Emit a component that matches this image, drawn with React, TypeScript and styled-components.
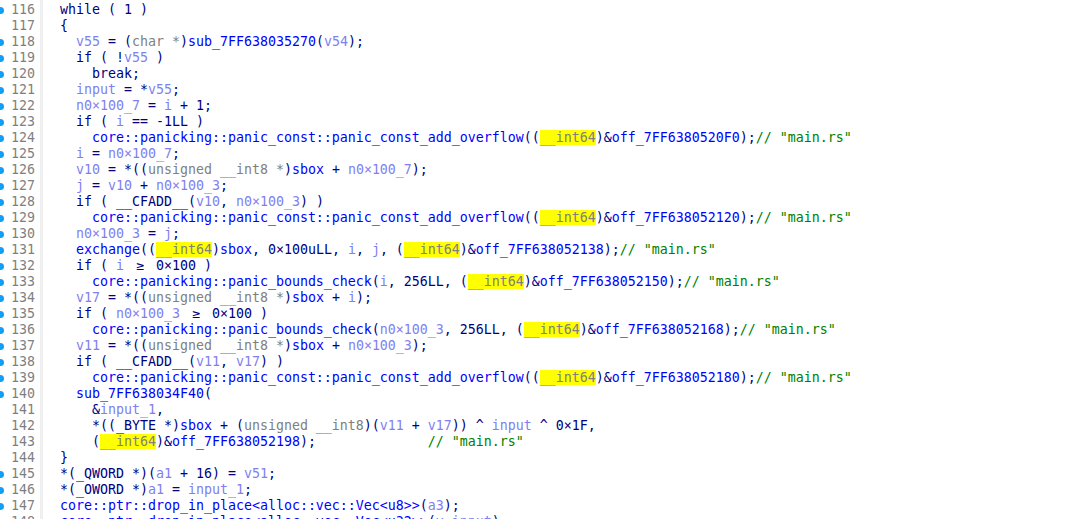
import React from "react";
import styled, { createGlobalStyle } from "styled-components";

const Global = createGlobalStyle`
  html, body {
    margin: 0;
    padding: 0;
    background: #ffffff;
    overflow: hidden;
  }
  body {
    width: 1084px;
    height: 519px;
  }
`;

type Kind = "n" | "f" | "l" | "t" | "h" | "c" | "g";

const colors: Record<Kind, string> = {
  n: "#000080",
  f: "#0000ff",
  l: "#8080f0",
  t: "#808080",
  h: "#808080",
  c: "#008000",
  g: "#000080",
};

const Page = styled.div`
  height: 519px;
  overflow: hidden;
  background: #ffffff;
  font-family: "DejaVu Sans Mono", "Liberation Mono", monospace;
  font-size: 13.29px;
  line-height: 16px;
`;

const Listing = styled.div`
  display: flex;
  flex-direction: column;
  margin-top: -14px;
`;

const Row = styled.div`
  display: flex;
  height: 16px;
`;

const Gutter = styled.div`
  position: relative;
  flex: 0 0 43px;
  box-sizing: border-box;
  padding-right: 5px;
  text-align: right;
  color: #7f7f7f;
  border-right: 3px solid #efefef;
`;

const Dot = styled.span`
  position: absolute;
  left: -3px;
  top: 50%;
  width: 7px;
  height: 7px;
  margin-top: -3px;
  border-radius: 50%;
  background: #12a0f2;
`;

const Code = styled.div`
  padding-left: 1px;
  white-space: pre;
  color: #000080;
`;

const Tok = styled.span<{ $kind: Kind }>`
  color: ${(p) => colors[p.$kind]};
  background: ${(p) => (p.$kind === "h" ? "#ffff00" : "transparent")};
`;

const Lig = styled.span`
  display: inline-block;
  width: 16px;
  text-align: center;
  color: #000080;
`;

type Line = { no: number; dot: boolean; src: string };

const L = (no: number, dot: boolean, src: string): Line => ({ no, dot, src });

const add = (off: string) =>
  `      [[f:core::panicking::panic_const::panic_const_add_overflow]](([[h:__int64]])&[[f:${off}]]);[[c:// "main.rs"]]`;

const lines: Line[] = [
  L(115, true, `  [[l:v54]] = *(([[t:char *]])[[l:a2]] + 8);`),
  L(116, true, `  while ( 1 )`),
  L(117, false, `  {`),
  L(118, true, `    [[l:v55]] = ([[t:char *]])[[f:sub_7FF638035270]]([[l:v54]]);`),
  L(119, true, `    if ( ![[l:v55]] )`),
  L(120, true, `      break;`),
  L(121, true, `    [[l:input]] = *[[l:v55]];`),
  L(122, true, `    [[l:n0×100_7]] = [[l:i]] + 1;`),
  L(123, true, `    if ( [[l:i]] == -1LL )`),
  L(124, true, add("off_7FF6380520F0")),
  L(125, true, `    [[l:i]] = [[l:n0×100_7]];`),
  L(126, true, `    [[l:v10]] = *(([[t:unsigned __int8 *]])[[f:sbox]] + [[l:n0×100_7]]);`),
  L(127, true, `    [[l:j]] = [[l:v10]] + [[l:n0×100_3]];`),
  L(128, true, `    if ( __CFADD__([[l:v10]], [[l:n0×100_3]]) )`),
  L(129, true, add("off_7FF638052120")),
  L(130, true, `    [[l:n0×100_3]] = [[l:j]];`),
  L(
    131,
    true,
    `    [[f:exchange]](([[h:__int64]])[[f:sbox]], 0×100uLL, [[l:i]], [[l:j]], ([[h:__int64]])&[[f:off_7FF638052138]]);[[c:// "main.rs"]]`
  ),
  L(132, true, `    if ( [[l:i]] [[g:>=]] 0×100 )`),
  L(
    133,
    true,
    `      [[f:core::panicking::panic_bounds_check]]([[l:i]], 256LL, ([[h:__int64]])&[[f:off_7FF638052150]]);[[c:// "main.rs"]]`
  ),
  L(134, true, `    [[l:v17]] = *(([[t:unsigned __int8 *]])[[f:sbox]] + [[l:i]]);`),
  L(135, true, `    if ( [[l:n0×100_3]] [[g:>=]] 0×100 )`),
  L(
    136,
    true,
    `      [[f:core::panicking::panic_bounds_check]]([[l:n0×100_3]], 256LL, ([[h:__int64]])&[[f:off_7FF638052168]]);[[c:// "main.rs"]]`
  ),
  L(137, true, `    [[l:v11]] = *(([[t:unsigned __int8 *]])[[f:sbox]] + [[l:n0×100_3]]);`),
  L(138, true, `    if ( __CFADD__([[l:v11]], [[l:v17]]) )`),
  L(139, true, add("off_7FF638052180")),
  L(140, true, `    [[f:sub_7FF638034F40]](`),
  L(141, false, `      &[[l:input_1]],`),
  L(
    142,
    false,
    `      *((_BYTE *)[[f:sbox]] + ([[t:unsigned __int8]])([[l:v11]] + [[l:v17]])) ^ [[l:input]] ^ 0×1F,`
  ),
  L(143, false, `      ([[h:__int64]])&[[f:off_7FF638052198]]);              [[c:// "main.rs"]]`),
  L(144, false, `  }`),
  L(145, true, `  *(_QWORD *)([[l:a1]] + 16) = [[l:v51]];`),
  L(146, true, `  *(_OWORD *)[[l:a1]] = [[l:input_1]];`),
  L(147, true, `  [[f:core::ptr::drop_in_place<alloc::vec::Vec<u8>>]]([[l:a3]]);`),
  L(148, true, `  [[f:core::ptr::drop_in_place<alloc::vec::Vec<u32>>]]([[l:v_input]]);`),
];

const parse = (s: string): { k: Kind; t: string }[] => {
  const out: { k: Kind; t: string }[] = [];
  const re = /\[\[(\w):(.*?)\]\]/g;
  let last = 0;
  let m: RegExpExecArray | null;
  while ((m = re.exec(s)) !== null) {
    if (m.index > last) out.push({ k: "n", t: s.slice(last, m.index) });
    out.push({ k: m[1] as Kind, t: m[2] });
    last = m.index + m[0].length;
  }
  if (last < s.length) out.push({ k: "n", t: s.slice(last) });
  return out;
};

export default function App() {
  return (
    <>
      <Global />
      <Page>
        <Listing>
          {lines.map((ln) => (
            <Row key={ln.no}>
              <Gutter>
                {ln.dot && <Dot />}
                {ln.no}
              </Gutter>
              <Code>
                {parse(ln.src).map((tk, i) =>
                  tk.k === "g" ? (
                    <Lig key={i}>≥</Lig>
                  ) : (
                    <Tok key={i} $kind={tk.k}>
                      {tk.t}
                    </Tok>
                  )
                )}
              </Code>
            </Row>
          ))}
        </Listing>
      </Page>
    </>
  );
}
